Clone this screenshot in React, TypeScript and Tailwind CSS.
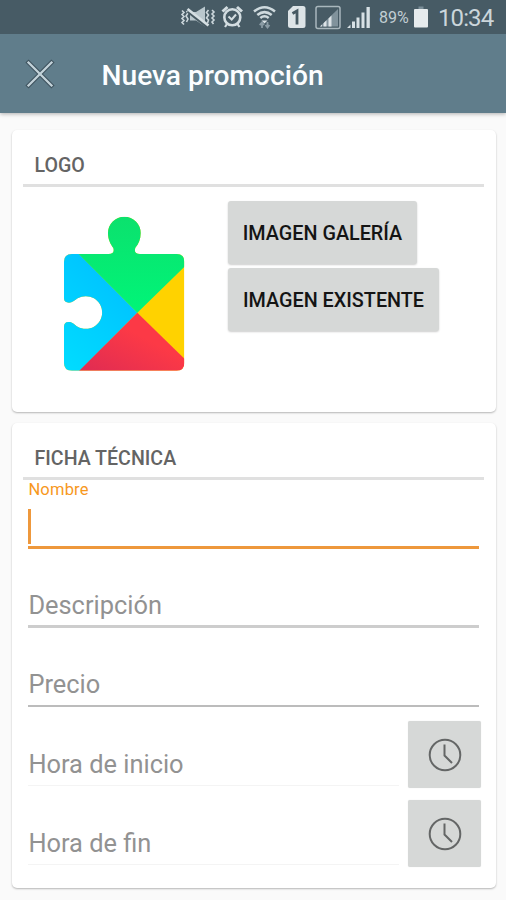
import React from "react";

function StatusIcons() {
  return (
    <svg className="block h-[34px] w-[506px]" viewBox="0 0 506 34" fill="none">
      {/* vibrate, muted */}
      <g stroke="#cbd6db" strokeWidth="1.6">
        <path d="M182 10.5l2 2-2 2 2 2-2 2 2 2-2 2 2 2" />
        <path d="M186.500 11l1.500 2-2 3 2 3-1.500 3" />
        <path d="M208.500 10l-2 2.500 2 2.500-2 3 2 2-1 3" />
        <path d="M212 10l2 2-2 2 2 2-2 2 2 2-2 2 1.500 2" />
      </g>
      <path d="M190 12h6l9-5.500v20l-9-6h-6z" fill="#b9c7cd" />
      <path d="M188 11l20 16" stroke="#475a63" strokeWidth="3.600" />
      <path d="M187.500 9l21 16.500" stroke="#d5dfe3" strokeWidth="2.700" />
      {/* alarm */}
      <g stroke="#d3dde1">
        <circle cx="232.300" cy="17.300" r="8" strokeWidth="2.600" />
        <path d="M222.500 11.500l5-4.500M242 11.500l-5-4.500" strokeWidth="3" />
        <path d="M227 24l-2 3M237.500 24l2 3" strokeWidth="2.200" />
        <path d="M228.500 16.500l3.200 3 4.300-5" strokeWidth="2" />
      </g>
      {/* wifi */}
      <g stroke="#cfdade" strokeWidth="2.500">
        <path d="M254 11.500q10.500-8.500 21 0" />
        <path d="M257.300 15q7.200-5.800 14.400 0" />
        <path d="M260.300 18q4.200-3.400 8.400 0" />
      </g>
      <path d="M261.500 20.500h6l-3 3z" fill="#dce4e7" />
      <path d="M262 28v-5m-2.300 2.200L262 22.500l2 2.500M267.500 22v5.500m-2-2.500l2 2.500 2-2.500" stroke="#8a9ba4" strokeWidth="1.800" />
      {/* SIM 1 */}
      <path d="M293 6h10q2.500 0 2.500 2.500v17q0 2.500-2.500 2.500h-12.500q-2.500 0-2.500-2.500V11z" fill="#dde4e7" />
      <path d="M292.500 13.500l4.500-2.500v13.500" stroke="#475a63" strokeWidth="2.800" />
      {/* boxed signal */}
      <rect x="316" y="6.500" width="24" height="22" rx="2" stroke="#a9b7bd" strokeWidth="1.500" />
      <path d="M320 26.500L338 9v17.500z" fill="#81939c" />
      <path d="M320 26.500h2v-2zM323.500 26.500h3v-6.200l-3 3zM328.500 26.500h3v-11l-3 3z" fill="#dde4e7" />
      {/* signal */}
      <g fill="#d8e1e5">
        <path d="M347 28h3.500v-3.500zM352 28h3v-6.500h-3zM356.500 28h3v-10.500h-3zM361.500 28h3v-15.500h-3zM366.500 28h3.300V7h-3.300z" />
      </g>
      {/* battery */}
      <path d="M418.500 6.500h5v2.500h-5z" fill="#7b8e98" />
      <rect x="414" y="9" width="14" height="18.500" rx="1" fill="#e6ebed" />
    </svg>
  );
}

function PuzzleLogo() {
  return (
    <svg className="mt-[18px] h-[180px] w-[150px] shrink-0" viewBox="0 0 450 540">
      <defs>
        <clipPath id="piece">
          <path d="M42 170Q42 147 66 147H176Q195 147 190 129C181 117 174 103 174 84A49 49 0 0 1 272 84C272 103 266 117 256 128Q250 147 270 147H380Q403 147 403 170V474Q403 497 380 497H66Q42 497 42 474V365Q42 350 57 351C68 351 72 359 83 365A49 49 0 1 0 83 280C72 287 68 293 57 293Q42 293 42 280Z" />
        </clipPath>
        <linearGradient id="blue" x1="0.500" y1="0" x2="0" y2="1">
          <stop offset="0" stopColor="#00bfff" />
          <stop offset="1" stopColor="#00e1ff" />
        </linearGradient>
        <linearGradient id="green" x1="0" y1="0" x2="0" y2="1">
          <stop offset="0" stopColor="#0ce06d" />
          <stop offset="1" stopColor="#00f578" />
        </linearGradient>
        <linearGradient id="red" x1="1" y1="0" x2="0" y2="1">
          <stop offset="0.400" stopColor="#fc3946" />
          <stop offset="1" stopColor="#dc2a54" />
        </linearGradient>
      </defs>
      <g clipPath="url(#piece)">
        <path d="M30 20H420V540H30Z" fill="#ffd200" />
        <path d="M30 90L262 323L30 557Z" fill="url(#blue)" />
        <path d="M30 20H420V169L262 323L86 147L30 91Z" fill="url(#green)" />
        <path d="M262 323L420 477V510H75Z" fill="url(#red)" />
      </g>
    </svg>
  );
}

function SectionTitle({ children }: { children: React.ReactNode }) {
  return (
    <h2 className="ml-[11px] mr-[12px] h-[57px] border-b-[3px] border-[#e0e0e0] pl-[11.500px] pt-[24px] text-[19.600px] font-medium leading-[24px] text-[#646464]">
      {children}
    </h2>
  );
}

function ImageButton({ children, className }: { children: React.ReactNode; className: string }) {
  return (
    <button
      className={`block h-[63px] rounded-[3px] bg-[#d6d8d7] pt-[2px] text-[19.800px] font-medium text-[#141414] shadow-[0_1px_2px_rgba(0,0,0,0.2)] ${className}`}
    >
      {children}
    </button>
  );
}

function TimeRow({ label }: { label: string }) {
  return (
    <div className="flex h-[67px] gap-[9px]">
      <div className="flex h-[65px] w-[370.500px] items-end border-b border-[#f4f4f4] pb-[5px] text-[25.400px] leading-[32px] text-[#929292]">
        {label}
      </div>
      <button className="flex w-[73px] items-center justify-center rounded-[2px] bg-[#d6d8d7] shadow-[0_0_1px_rgba(0,0,0,0.15)]">
        <svg className="ml-[1px] h-[36px] w-[36px]" viewBox="0 0 36 36" fill="none" stroke="#646666" strokeWidth="2">
          <circle cx="18" cy="18" r="15.300" />
          <path d="M17.500 7.500v11l7.500 7.500" />
        </svg>
      </button>
    </div>
  );
}

export default function App() {
  return (
    <div className="h-[900px] w-[506px] overflow-hidden bg-[#fafafa] font-[Roboto,sans-serif]">
      <div className="relative h-[34px] bg-[#475b65]">
        <StatusIcons />
        <span className="absolute left-[379px] top-[8px] text-[16px] leading-[20px] text-[#c2ced3]">89%</span>
        <span className="absolute left-[438px] top-[3px] text-[24px] leading-[30px] tracking-[-0.900px] text-[#cbd6db]">10:34</span>
      </div>
      <header className="flex h-[79px] items-center bg-[#607d8b] shadow-[0_1px_4px_rgba(0,0,0,0.3)]">
        <svg className="ml-[25px] h-[30px] w-[30px]" viewBox="0 0 30 30" fill="none">
          <path d="M2 2l26 26M28 2l-26 26" stroke="#40545f" strokeWidth="4.500" />
          <path d="M2.700 2.700l24.600 24.600M27.300 2.700L2.700 27.300" stroke="#c3d3da" strokeWidth="2.300" />
        </svg>
        <h1 className="ml-[46.500px] mt-[4px] text-[28.200px] font-medium leading-[36px] text-[#fcfeff]">Nueva promoción</h1>
      </header>

      <main className="pl-[12px] pr-[10px] pt-[17px]">
        <section className="h-[282px] rounded-[5px] bg-white shadow-[0_1px_2px_rgba(0,0,0,0.28)]">
          <SectionTitle>LOGO</SectionTitle>
          <div className="flex pl-[38px]">
            <PuzzleLogo />
            <div className="ml-[28px] flex flex-col gap-[4px] pt-[14px]">
              <ImageButton className="w-[189px]">IMAGEN GALERÍA</ImageButton>
              <ImageButton className="w-[211px]">IMAGEN EXISTENTE</ImageButton>
            </div>
          </div>
        </section>

        <section className="mt-[11px] h-[465px] rounded-[5px] bg-white shadow-[0_1px_2px_rgba(0,0,0,0.28)]">
          <SectionTitle>FICHA TÉCNICA</SectionTitle>
          <div className="pl-[16.400px]">
            <div className="flex h-[69px] w-[450.500px] flex-col border-b-[3px] border-[#ee983c] text-[#f7981d]">
              <label className="text-[16.500px] leading-[19px] tracking-[0.200px]">Nombre</label>
              <div className="mt-[10px] h-[35px] w-[3px] bg-[#ee983c]" />
            </div>
            <div className="flex h-[79px] w-[450.500px] items-end border-b-[3px] border-[#cdcdcd] pb-[4px] text-[25.400px] leading-[32px] text-[#929292]">
              Descripción
            </div>
            <div className="flex h-[79px] w-[450.500px] items-end border-b-2 border-[#bcbcbc] pb-[5px] text-[25.400px] leading-[32px] text-[#929292]">
              Precio
            </div>
            <div className="mt-[14px] flex flex-col gap-[12px]">
              <TimeRow label="Hora de inicio" />
              <TimeRow label="Hora de fin" />
            </div>
          </div>
        </section>
      </main>
    </div>
  );
}
